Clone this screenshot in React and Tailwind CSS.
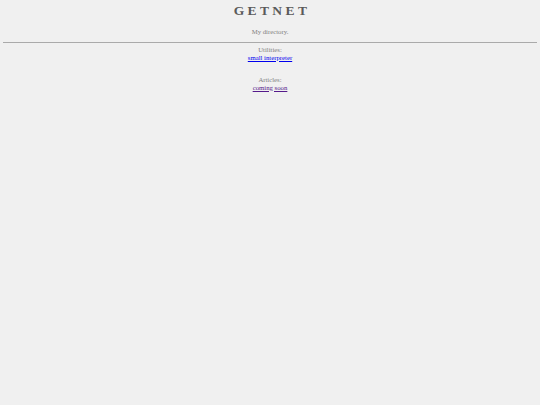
export default function App() {
  return (
    <div className="min-h-[405px] bg-[#f0f0f0] text-center text-[#808080] font-['Liberation_Serif',serif] pt-[4px]">
      <h1 className="text-[13.5px] font-bold tracking-[3.4px] text-[#5a5a5a] leading-[14px] pl-[4px]">GETNET</h1>
      <p className="text-[6.75px] leading-[8px] mt-[10px]">My directory.</p>
      <hr className="mx-[3px] mt-[6px] border-t border-[#aaa]" />
      <div className="mt-[3px] text-[6.75px] leading-[7.5px]">
        <p>Utilities:</p>
        <a href="#" className="text-[#0000ee] underline">small interpreter</a>
      </div>
      <div className="mt-[15px] text-[6.75px] leading-[7.5px]">
        <p>Articles:</p>
        <a href="#" className="text-[#551a8b] underline">coming soon</a>
      </div>
    </div>
  );
}
